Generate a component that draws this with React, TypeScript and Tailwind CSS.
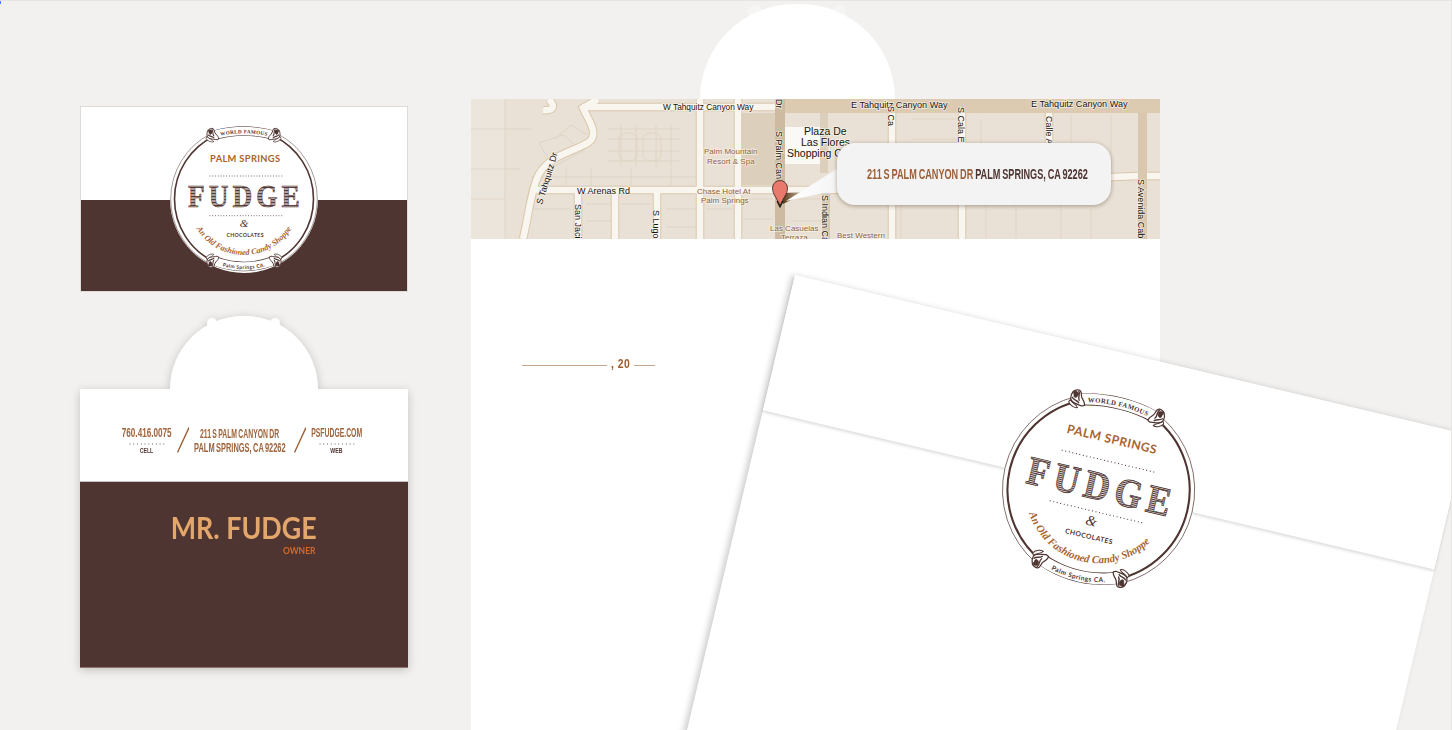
import React from 'react';

const brown = '#4f3531';
const copper = '#a9642f';

// points on the seal's rings, degrees clockwise from the top
const pt = (r: number, deg: number) => {
  const a = (deg * Math.PI) / 180;
  return `${(90 + r * Math.sin(a)).toFixed(2)} ${(90 - r * Math.cos(a)).toFixed(2)}`;
};
const ring = (r: number, from: number, to: number) => `M${pt(r, from)} A${r} ${r} 0 0 1 ${pt(r, to)}`;
const ringBack = (r: number, from: number, to: number) => `M${pt(r, from)} A${r} ${r} 0 0 0 ${pt(r, to)}`;

const Knot = ({ x, y, flip, up }: { x: number; y: number; flip?: boolean; up?: boolean }) => (
  <g transform={`translate(${x} ${y}) scale(${flip ? -0.95 : 0.95} ${up ? -0.95 : 0.95})`} fill="none" stroke={brown} strokeLinejoin="round" strokeLinecap="round">
    <path d="M6 6 C2 5 -3 6 -4 2 C-5 -2 -3 -6 1 -6 C4 -6 3 -2 5 0 C7 2 8 3 8 5 Z" fill="#fff" strokeWidth="1" />
    <path d="M-3 -4 C0 -5 2 -4 1 -1 C0 1 -2 1 -2 -1 Z" fill={brown} strokeWidth="0.6" />
    <path d="M1 -5 C3 -3 1 0 3 2 M-3 1 C-1 3 1 2 3 4" strokeWidth="1.1" />
    <path d="M-4 3 C-2 6 1 5 3 8 C1 9 -3 8 -5 5 Z" fill="#fff" strokeWidth="0.8" />
  </g>
);

const Seal = ({ id, size }: { id: string; size: number }) => (
  <svg width={size} height={size} viewBox="0 0 180 180" className="block">
    <defs>
      <pattern id={`${id}-st`} width="4" height="1.5" patternUnits="userSpaceOnUse">
        <rect width="4" height="1.5" fill="#fff" />
        <rect width="4" height="0.9" fill={brown} />
      </pattern>
      <path id={`${id}-top`} d="M60 28.5 Q90 20 120 28.5" />
      <path id={`${id}-bot`} d="M60 154.5 Q90 165.5 120 154.5" />
      <path id={`${id}-arc`} d={ringBack(56, 255, 105)} />
    </defs>
    <circle cx="90" cy="90" r="74" fill="#fff" />
    <g fill="none" stroke={brown}>
      <path d={ring(73.3, 27, 153)} strokeWidth="0.5" />
      <path d={ring(73.3, 207, 333)} strokeWidth="0.5" />
      <path d={ring(69.5, 25, 155)} strokeWidth="1.6" />
      <path d={ring(69.5, 205, 335)} strokeWidth="1.6" />
    </g>
    <g fill="none">
      <path d="M61 26 Q90 18 119 26" stroke={brown} strokeWidth="9.4" />
      <path d="M60 26 Q90 18 120 26" stroke="#fff" strokeWidth="8.4" />
      <path d="M61 152 Q90 163 119 152" stroke={brown} strokeWidth="9.4" />
      <path d="M60 152 Q90 163 120 152" stroke="#fff" strokeWidth="8.4" />
    </g>
    <Knot x={57} y={25} />
    <Knot x={122} y={25} flip />
    <Knot x={57} y={153} up />
    <Knot x={123} y={153} flip up />
    <text fontSize="5.2" fill={brown} letterSpacing="0.3" textAnchor="middle" className="font-['Liberation_Serif'] font-bold">
      <textPath href={`#${id}-top`} startOffset="50%">WORLD FAMOUS</textPath>
    </text>
    <text fontSize="5" fill={brown} letterSpacing="0.35" textAnchor="middle" className="font-['Lato'] font-bold">
      <textPath href={`#${id}-bot`} startOffset="50%">Palm Springs CA.</textPath>
    </text>
    <text x="56" y="53.3" fontSize="9.3" fill={copper} textLength="70" className="font-['Lato'] font-bold">PALM SPRINGS</text>
    <line x1="56" y1="67" x2="128" y2="67" stroke={brown} strokeWidth="0.9" strokeLinecap="round" strokeDasharray="0.01 2.75" />
    <g transform="translate(34 97.6) scale(0.88 1)">
      <text x="0" y="0" fontSize="31" fill={`url(#${id}-st)`} stroke={brown} strokeWidth="0.55" textLength="127" className="font-['Liberation_Serif'] font-bold">FUDGE</text>
    </g>
    <line x1="56" y1="106.7" x2="128" y2="106.7" stroke={brown} strokeWidth="0.9" strokeLinecap="round" strokeDasharray="0.01 2.75" />
    <text x="90" y="118" fontSize="11" fill={brown} textAnchor="middle" className="font-['Liberation_Serif'] italic">&amp;</text>
    <text x="72.5" y="128" fontSize="5.2" fill={brown} textLength="37" className="font-['Lato'] font-bold">CHOCOLATES</text>
    <text fontSize="8.2" fill={copper} textAnchor="middle" className="font-['Liberation_Serif'] font-bold italic">
      <textPath href={`#${id}-arc`} startOffset="50%">An Old Fashioned Candy Shoppe</textPath>
    </text>
  </svg>
);

type Label = { t: string; x: number; y: number; r?: number; c?: string; s?: number };

const labels: Label[] = [
  { t: 'W Tahquitz Canyon Way', x: 192, y: 11, s: 8.3 },
  { t: 'E Tahquitz Canyon Way', x: 380, y: 9, s: 9.1 },
  { t: 'E Tahquitz Canyon Way', x: 560, y: 8, s: 9.1 },
  { t: 'W Arenas Rd', x: 106, y: 95, s: 9 },
  { t: 'Plaza De', x: 333, y: 36, s: 10.5 },
  { t: 'Las Flores', x: 330, y: 47, s: 10.5 },
  { t: 'Shopping Ce', x: 316, y: 58, s: 10.5 },
  { t: 'Palm Mountain', x: 233, y: 55, s: 8, c: '#8a6236' },
  { t: 'Resort & Spa', x: 236, y: 65, s: 8, c: '#8a6236' },
  { t: 'Chase Hotel At', x: 226, y: 95, s: 8, c: '#8a6236' },
  { t: 'Palm Springs', x: 230, y: 104, s: 8, c: '#8a6236' },
  { t: 'Las Casuelas', x: 299, y: 132, s: 8, c: '#8a6236' },
  { t: 'Terraza', x: 310, y: 141, s: 8, c: '#8a6236' },
  { t: 'Best Western', x: 366, y: 139, s: 8, c: '#8a6236' },
  { t: 'S Palm Can', x: 305, y: 32, r: 90, s: 9 },
  { t: 'Dr', x: 305, y: 0, r: 90, s: 9 },
  { t: 'S Tahquitz Dr', x: 71, y: 106, r: -73, s: 9 },
  { t: 'San Jacin', x: 104, y: 105, r: 90, s: 9 },
  { t: 'S Lugo', x: 182, y: 111, r: 90, s: 9 },
  { t: 'S Indian Can', x: 351, y: 96, r: 90, s: 9 },
  { t: 'S Ca', x: 417, y: 7, r: 90, s: 9 },
  { t: 'S Cala El', x: 487, y: 8, r: 90, s: 9 },
  { t: 'Calle A', x: 575, y: 17, r: 90, s: 9 },
  { t: 'S Avenida Cab', x: 667, y: 80, r: 90, s: 9 },
];

const MapArt = () => (
  <svg width="689" height="140" viewBox="0 0 689 140" className="block">
    <defs>
      <linearGradient id="pin-shade" x1="0" x2="1" y1="0" y2="0">
        <stop offset="0" stopColor="#5a3a18" />
        <stop offset="1" stopColor="#5a3a18" stopOpacity="0" />
      </linearGradient>
      <linearGradient id="tail" x1="0" x2="1" y1="0" y2="0">
        <stop offset="0" stopColor="#fff" />
        <stop offset="1" stopColor="#f3f3f3" />
      </linearGradient>
    </defs>
    <rect width="689" height="140" fill="#e9e1d5" />
    <rect width="34" height="140" fill="#ece5db" />
    <rect x="271" y="14" width="33" height="72" fill="#dccfbc" />
    <g fill="none" stroke="#dfd5c6" strokeWidth="1">
      <path d="M34 0 V140 M0 30 H60 M0 70 H50 M0 100 H34 M68 44 L92 36 L112 52 L82 68 Z M84 40 L100 26 L116 36 M60 78 H230 M95 70 V90 M120 70 V90 M160 70 V90 M200 70 V90" />
      <path d="M137 30 H208 M137 40 H208 M137 52 H208 M137 62 H208 M150 26 V68 M165 26 V68 M185 26 V68 M200 26 V68" />
      <rect x="148" y="34" width="18" height="28" rx="7" />
      <rect x="172" y="34" width="18" height="28" rx="7" />
      <path d="M60 110 H100 M115 105 H140 M115 122 H140 M150 105 H180 M195 110 H225 M195 128 H225 M235 110 H262 M272 100 H302 M272 120 H302 M320 100 H350 M320 122 H350 M362 95 H416 M430 92 V140 M500 100 H570 M515 100 V140 M545 100 V140 M590 86 V140 M620 110 V140 M640 16 V70 M600 16 V60 M510 20 V60 M440 20 H485 M440 40 H485" />
    </g>
    <rect x="312" y="28" width="37" height="37" fill="#fbf9f5" />
    <rect x="314" y="0" width="375" height="14" fill="#dccab1" />
    <rect x="304" y="0" width="10" height="140" fill="#cdbaa0" />
    <rect x="349" y="14" width="8" height="60" fill="#dccfbc" />
    <rect x="351" y="85" width="8" height="55" fill="#d6c6ae" />
    <rect x="667" y="14" width="9" height="126" fill="#d9c8af" />
    <g fill="none" strokeLinecap="butt">
      <g stroke="#d9c7ac" strokeWidth="8.5">
        <path id="map-roads" d="M111 8 H304 M127 0 L112 9 C118 22 128 35 118 43 C105 52 80 55 68 75 C60 90 58 115 52 140 M78 0 C85 8 82 12 72 11 M62 91 H304 M314 91 H360 L460 85 L667 77 M676 77 H689 M229 0 V140 M267 0 V140 M144 91 V140 M186 91 V140 M107 91 V140 M421 14 V140 M491 14 V140 M578 14 V80" />
      </g>
      <use href="#map-roads" stroke="#f9f5ef" strokeWidth="6.5" />
    </g>
    {labels.map((l, i) => (
      <text
        key={i}
        x={l.x}
        y={l.y}
        fontSize={l.s ?? 9.5}
        fill={l.c ?? '#1a140e'}
        stroke="#fbf6ee"
        strokeOpacity="0.75"
        strokeWidth="1.6"
        paintOrder="stroke"
        transform={l.r ? `rotate(${l.r} ${l.x} ${l.y})` : undefined}
        className="font-['Liberation_Sans']"
      >
        {l.t}
      </text>
    ))}
    <path d="M312 105 L336 93 L312 94 Z" fill="url(#pin-shade)" />
    <path d="M315 102 L372 66 L372 90 Z" fill="url(#tail)" />
    <path d="M309 107 C307 100 301.5 96 301.5 89 A7.5 7.5 0 0 1 316.5 89 C316.5 96 311 100 309 107 Z" fill="#e8796c" stroke="#33261c" strokeWidth="0.8" />
    <path d="M306 102 L309 108 L312 102" fill="none" stroke="#1a140e" strokeWidth="1.2" />
  </svg>
);

const cond = "inline-block font-['Liberation_Sans'] font-bold whitespace-nowrap [word-spacing:-1px]";

const Dots = () => (
  <svg width="36" height="2" viewBox="0 0 36 2" className="block mt-[3px] shrink-0">
    <line x1="1" y1="1" x2="35" y2="1" stroke="#4f3531" strokeWidth="1" strokeLinecap="round" strokeDasharray="0.01 3.75" />
  </svg>
);

const Slash = () => (
  <svg width="12" height="26" viewBox="0 0 12 26" className="shrink-0">
    <line x1="12" y1="0.5" x2="0.5" y2="25.5" stroke="#9b5f37" strokeWidth="1.4" />
  </svg>
);

export default function App() {
  return (
    <div className="relative flex w-[1452px] h-[730px] overflow-hidden bg-[#f2f1ef] border-t border-r border-[#e6e5e4]">
      <div className="absolute left-0 top-[-1px] w-px h-1 bg-[#4a7dff]" />

      <div className="w-[471px] shrink-0 pl-[80px] pt-[105px]">
        <div className="relative w-[328px] h-[186px] border border-[#dfdbd9] flex flex-col">
          <div className="h-[93px] bg-white" />
          <div className="flex-1 bg-[#4f3531]" />
          <div className="absolute left-[73px] top-[2px]">
            <Seal id="card" size={180} />
          </div>
        </div>

        <div className="mt-[24px] w-[328px] drop-shadow-[0_2px_5px_rgba(0,0,0,0.2)]">
          <div className="relative mx-auto w-[148px] h-[73px] rounded-t-full bg-white">
            <div className="absolute left-[37px] top-[2px] w-[10px] h-[10px] rounded-full bg-white" />
            <div className="absolute right-[38px] top-[2px] w-[10px] h-[10px] rounded-full bg-white" />
          </div>
          <div className="h-[93px] bg-white border-b border-[#c9c4c1] pl-[41px] pt-[38px] flex gap-[5px]">
            <div className="w-[51px] flex flex-col items-center">
              <span className={`${cond} text-[12px] leading-[13px] text-[#a0633a] scale-x-[0.68]`}>760.416.0075</span>
              <Dots />
              <span className={`${cond} text-[8px] leading-[10px] mt-[1px] text-[#4f3531] scale-x-[0.65]`}>CELL</span>
            </div>
            <Slash />
            <div className="w-[92px] flex flex-col items-center">
              <span className={`${cond} text-[12px] leading-[14px] text-[#a0633a] scale-x-[0.57]`}>211 S PALM CANYON DR</span>
              <span className={`${cond} text-[12px] leading-[14px] text-[#a0633a] scale-x-[0.62]`}>PALM SPRINGS, CA 92262</span>
            </div>
            <div className="ml-[3px] shrink-0">
              <Slash />
            </div>
            <div className="w-[51px] flex flex-col items-center">
              <span className={`${cond} text-[12px] leading-[13px] text-[#a0633a] scale-x-[0.57]`}>PSFUDGE.COM</span>
              <Dots />
              <span className={`${cond} text-[8px] leading-[10px] mt-[1px] text-[#4f3531] scale-x-[0.65]`}>WEB</span>
            </div>
          </div>
          <div className="h-[186px] bg-[#4f3531] border-b border-[#8d746c] flex justify-center pt-[27px]">
            <div className="w-[145px] flex flex-col items-end">
              <span className="font-['Lato'] font-bold text-[31px] leading-[36px] text-[#e3a76b] whitespace-nowrap origin-right scale-x-[0.865]">MR. FUDGE</span>
              <span className="font-['Lato'] font-bold text-[8.5px] leading-[11px] mt-[1px] mr-px text-[#d4692a]">OWNER</span>
            </div>
          </div>
        </div>
      </div>

      <div className="w-[689px] shrink-0 pt-[3px] flex flex-col">
        <div className="relative ml-[229px] w-[195px] h-[95px] rounded-t-full">
          <div className="absolute left-[48px] top-[1px] w-[14px] h-[14px] rounded-full bg-[#f5f5f4]" />
          <div className="absolute right-[49px] top-[1px] w-[14px] h-[14px] rounded-full bg-[#f5f5f4]" />
          <div className="absolute inset-0 rounded-t-full bg-white" />
        </div>
        <div className="relative">
          <MapArt />
          <div className="absolute left-[366px] top-[44px] w-[274px] h-[62px] rounded-[18px] bg-[#f3f3f3] shadow-[0_1px_4px_rgba(80,60,40,0.45)] flex items-center pl-[30px]">
            <span className={`${cond} text-[14px] origin-left scale-x-[0.652] text-[#9c5f38]`}>
              211 S PALM CANYON DR <span className="text-[#4f3531]">PALM SPRINGS, CA 92262</span>
            </span>
          </div>
        </div>
        <div className="flex-1 bg-white pl-[51px] pt-[117px]">
          <div className="flex items-center">
            <div className="w-[85px] h-px bg-[#c9a78f] mt-[4px]" />
            <div className="flex w-[20px] ml-[4px] mr-[3px]">
              <span className="inline-block origin-left scale-x-[0.8] font-['Liberation_Sans'] font-bold text-[13px] leading-[15px] tracking-[0.6px] whitespace-nowrap text-[#9f5a2b]">, 20</span>
            </div>
            <div className="w-[21px] h-px bg-[#c9a78f] mt-[4px]" />
          </div>
        </div>
      </div>

      {/* envelope lying over the letterhead */}
      <div className="absolute left-[795px] top-[274px] w-[690px] h-[500px] origin-top-left rotate-[13.35deg] bg-white shadow-[-3px_1px_6px_rgba(0,0,0,0.2)]">
        <div className="relative h-[139px] bg-white shadow-[0_2px_3px_rgba(0,0,0,0.13)]" />
        <div className="absolute left-[227px] top-[21px]">
          <Seal id="env" size={236} />
        </div>
      </div>
    </div>
  );
}
